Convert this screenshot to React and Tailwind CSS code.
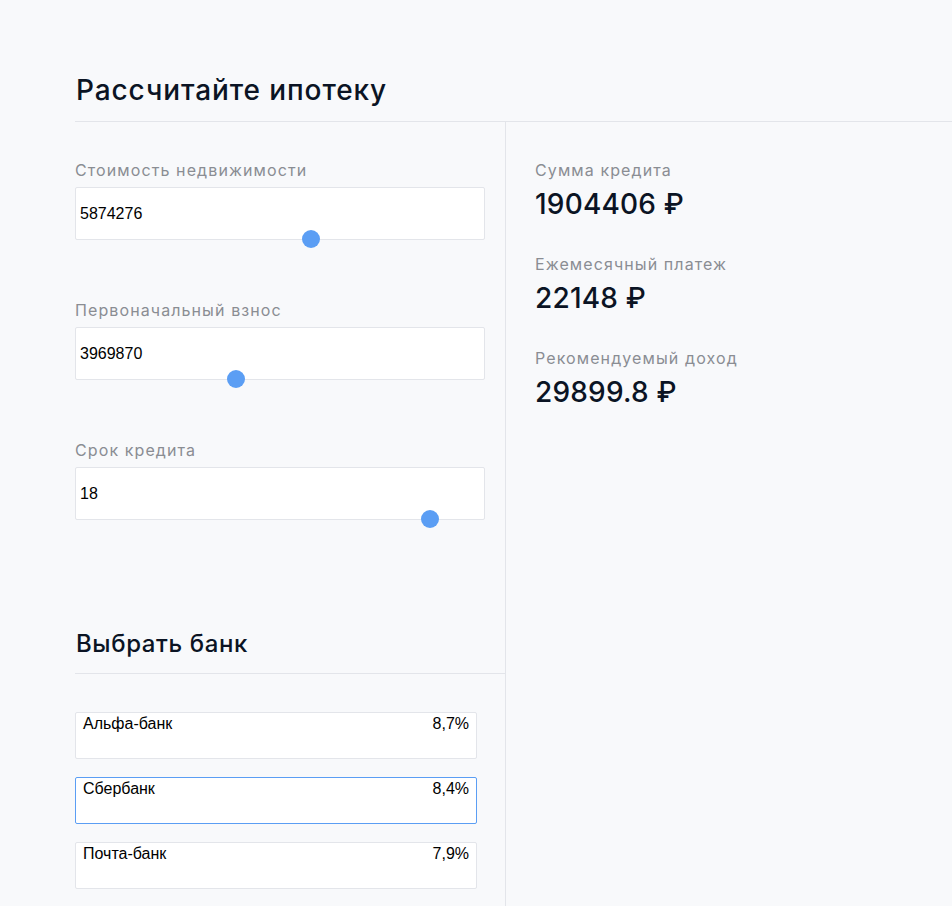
import React from "react";

const F = { fontFamily: "Inter, 'Noto Sans', sans-serif" };

function Field({ label, value, thumb }) {
  return (
    <div className="flex flex-col">
      <div className="text-[16px] leading-[20px] text-[#8a8d93] tracking-[1.1px]" style={F}>{label}</div>
      <div className="relative mt-[7px] w-[410px]">
        <div className="h-[53px] bg-white border border-[#e3e5ea] rounded-[2px] pl-[4px] pt-[14px] text-[16px] text-black font-['Liberation_Sans',Arial,sans-serif]">
          {value}
        </div>
        <div className={`absolute top-[43px] w-[18px] h-[18px] rounded-full bg-[#5b9ef4] ${thumb}`} />
      </div>
    </div>
  );
}

function Bank({ name, rate, active }) {
  return (
    <div className={`h-[47px] w-[402px] bg-white border rounded-[2px] flex justify-between px-[7px] pt-[1px] text-[16px] leading-[20px] text-black font-['Liberation_Sans',Arial,sans-serif] ${active ? "border-[#5b9ef4]" : "border-[#e3e5ea]"}`}>
      <span>{name}</span>
      <span>{rate}</span>
    </div>
  );
}

function Stat({ label, value }) {
  return (
    <div className="flex flex-col">
      <div className="text-[16px] leading-[20px] text-[#8a8d93] tracking-[1.1px]" style={F}>{label}</div>
      <div className="text-[28px] leading-[34px] text-[#0b1424] font-medium mt-[7px] tracking-[0.2px]" style={F}>{value}</div>
    </div>
  );
}

export default function App() {
  return (
    <div className="min-h-[906px] w-[952px] bg-[#f8f9fb] overflow-hidden">
      <div className="pl-[75px] pt-[73px]">
        <h1 className="text-[28px] leading-[34px] text-[#0b1424] font-medium pl-[1px] pb-[14px] border-b border-[#e3e5ea] tracking-[0.9px]" style={F}>
          Рассчитайте ипотеку
        </h1>
        <div className="flex">
          <div className="w-[431px] border-r border-[#e3e5ea] pt-[38px] pb-[60px]">
            <div className="flex flex-col gap-[60px]">
              <Field label="Стоимость недвижимости" value="5874276" thumb="left-[227px]" />
              <Field label="Первоначальный взнос" value="3969870" thumb="left-[152px]" />
              <Field label="Срок кредита" value="18" thumb="left-[346px]" />
            </div>
            <h2 className="mt-[109px] text-[24px] leading-[30px] text-[#0b1424] font-medium pl-[1px] pb-[14px] border-b border-[#e3e5ea] tracking-[0.6px]" style={F}>
              Выбрать банк
            </h2>
            <div className="flex flex-col gap-[18px] mt-[38px]">
              <Bank name="Альфа-банк" rate="8,7%" />
              <Bank name="Сбербанк" rate="8,4%" active />
              <Bank name="Почта-банк" rate="7,9%" />
            </div>
          </div>
          <div className="pl-[29px] pt-[38px] flex flex-col gap-[33px]">
            <Stat label="Сумма кредита" value="1904406 ₽" />
            <Stat label="Ежемесячный платеж" value="22148 ₽" />
            <Stat label="Рекомендуемый доход" value="29899.8 ₽" />
          </div>
        </div>
      </div>
    </div>
  );
}
